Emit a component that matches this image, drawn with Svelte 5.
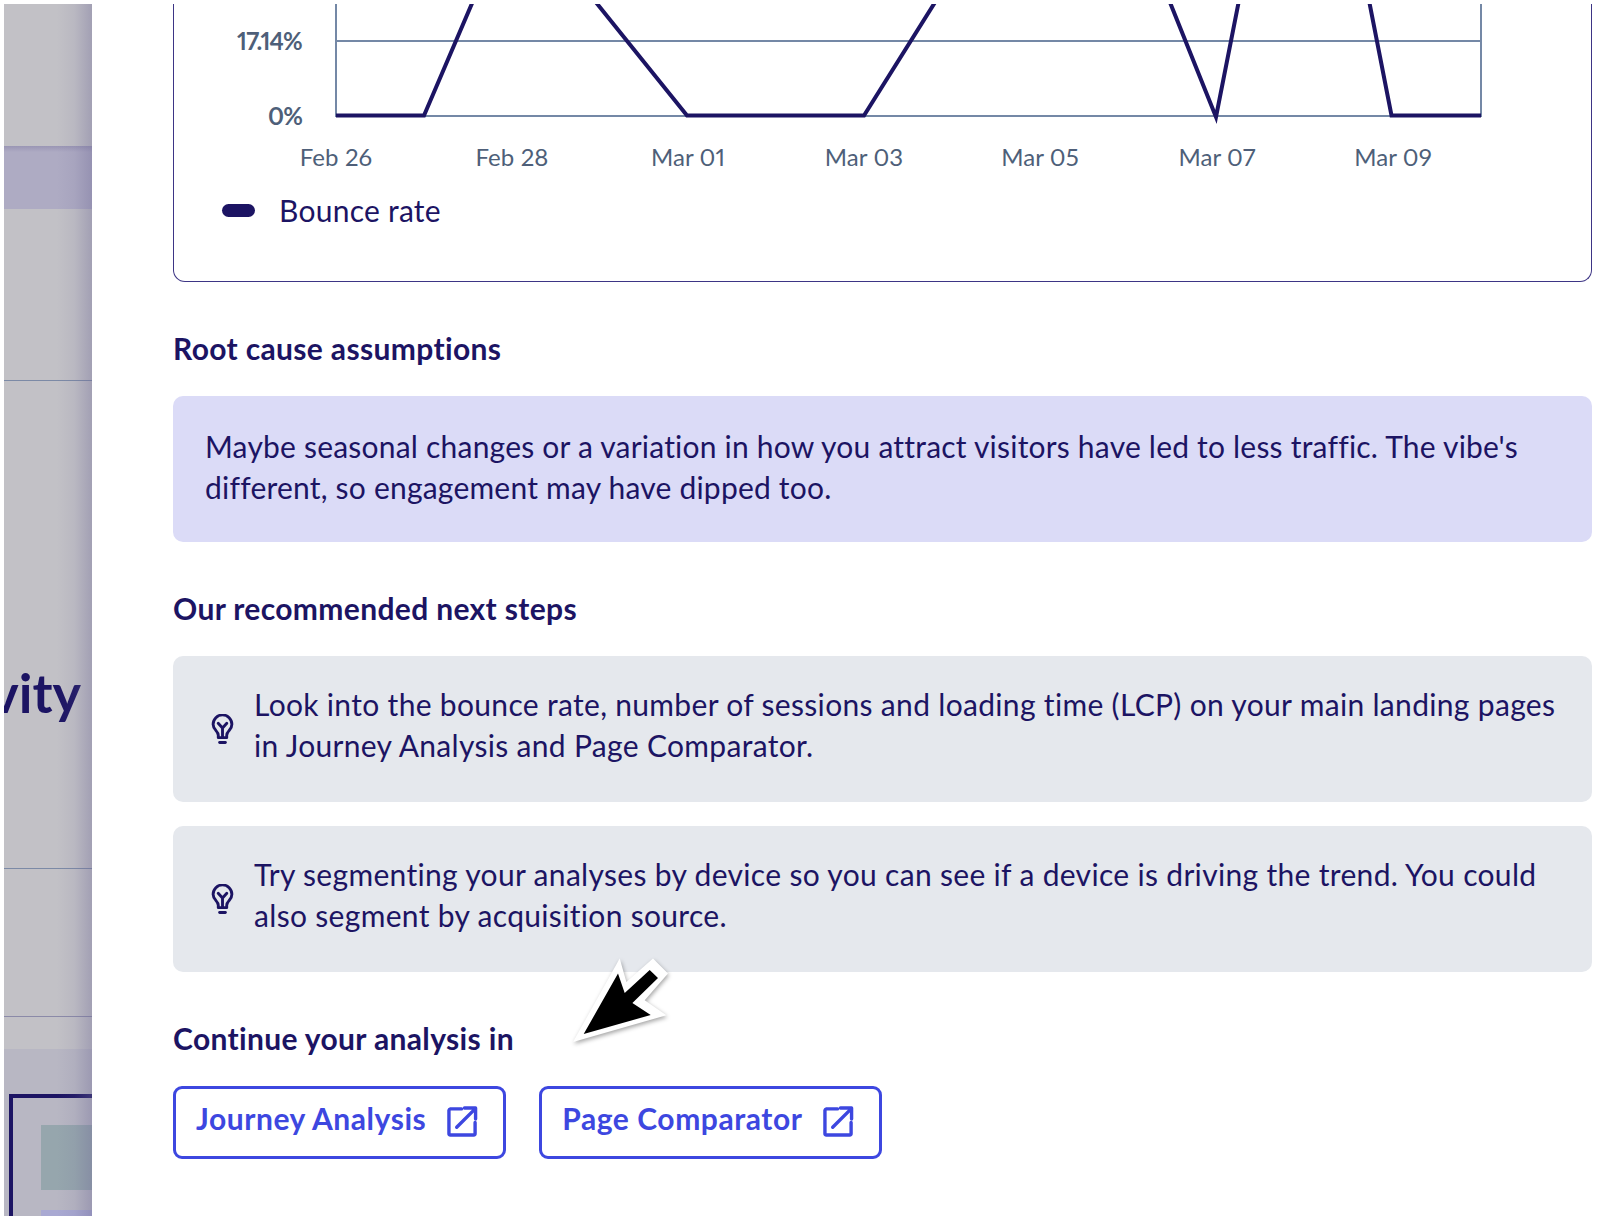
<script lang="ts">
  const ticks = [
    { label: 'Feb 26', x: 336 },
    { label: 'Feb 28', x: 512 },
    { label: 'Mar 01', x: 688 },
    { label: 'Mar 03', x: 864 },
    { label: 'Mar 05', x: 1040 },
    { label: 'Mar 07', x: 1217 },
    { label: 'Mar 09', x: 1393 }
  ];

  const bounce = '336,115.5 424,115.5 482,-20 578,-20 687,115.5 864,115.5 949,-20 1161,-20 1216,117 1243,-20 1365,-20 1391.5,115.5 1481,115.5';

  const steps = [
    'Look into the bounce rate, number of sessions and loading time (LCP) on your main landing pages in Journey Analysis and Page Comparator.',
    'Try segmenting your analyses by device so you can see if a device is driving the trend. You could also segment by acquisition source.'
  ];

  const links = ['Journey Analysis', 'Page Comparator'];
</script>

<div class="page">
  <aside class="behind">
    <div class="bg h142"></div>
    <div class="band"></div>
    <div class="bg h172 line"></div>
    <div class="bg title-row line">
      <span class="title">Activity</span>
    </div>
    <div class="bg h148 line2"></div>
    <div class="bg h33"></div>
    <div class="preview">
      <div class="frame">
        <div class="teal"></div>
        <div class="lilac"></div>
      </div>
    </div>
  </aside>

  <main class="panel">
    <section class="card">
      <svg class="chart" viewBox="174.500 4 1416 170" role="img" aria-label="Bounce rate chart">
        <line x1="336" y1="41" x2="1481" y2="41" class="grid" />
        <line x1="336" y1="116" x2="1481" y2="116" class="grid" />
        <line x1="336" y1="0" x2="336" y2="117" class="grid" />
        <line x1="1481" y1="0" x2="1481" y2="117" class="grid" />
        <polyline points={bounce} class="series" />
        <text x="302" y="50" text-anchor="end" class="ylabel">17.14%</text>
        <text x="302" y="125" text-anchor="end" class="ylabel">0%</text>
        {#each ticks as t}
          <text x={t.x} y="166" text-anchor="middle" class="xlabel">{t.label}</text>
        {/each}
      </svg>
      <div class="legend">
        <span class="pill"></span>
        <span>Bounce rate</span>
      </div>
    </section>

    <h3>Root cause assumptions</h3>
    <p class="assumption">Maybe seasonal changes or a variation in how you attract visitors have led to less traffic. The vibe's different, so engagement may have dipped too.</p>

    <h3>Our recommended next steps</h3>
    <div class="steps">
      {#each steps as step}
        <div class="step">
          <svg class="bulb" viewBox="0 0 24 32" fill="none" stroke="currentColor" stroke-width="3" stroke-linecap="round" stroke-linejoin="round">
            <path d="M7.600 24.500v-2.600c0-2-1-3.200-2.600-5A9.800 9.800 0 0 1 2.200 10.600a9.800 9.800 0 0 1 19.600 0c0 2.500-1 4.500-2.800 6.300-1.600 1.800-2.600 3-2.600 5v2.600z" />
            <path d="M12 24v-9.500M7.500 9.500 12 14.500l4.500-5" />
            <path d="M9 29.500h6" stroke-width="3" />
          </svg>
          <p>{step}</p>
        </div>
      {/each}
    </div>

    <h3>Continue your analysis in</h3>
    <div class="links">
      {#each links as link}
        <button type="button">
          {link}
          <svg viewBox="0 0 32 32" fill="none" stroke="currentColor" stroke-width="3.500" stroke-linejoin="round" stroke-linecap="round">
            <path d="M15 3H3.500a2 2 0 0 0-1.500 1.500v24a1.500 1.500 0 0 0 1.500 1.500h24a1.500 1.500 0 0 0 1.500-1.500V17" />
            <path d="M10 22 29 3M18 2h11.500v11.500" />
          </svg>
        </button>
      {/each}
    </div>

    <svg class="pointer" viewBox="0 0 110 100">
      <polygon points="5,98 51.700,14.600 58.400,38 85,14.600 100,29.600 76.700,56.300 98.400,71.300" fill="#fff" />
      <polygon points="15.700,90 50,29.600 56.700,49 81.700,26 90,34 64.400,59 82.700,71" fill="#000" />
    </svg>
  </main>
</div>

<style>
  :global(body) {
    margin: 0;
    background: #fff;
  }

  .page {
    display: flex;
    height: 1212px;
    padding: 4px 0 0 4px;
    overflow: hidden;
    font-family: "Lato", "Noto Sans", sans-serif;
    color: #1c1463;
  }

  .behind {
    position: relative;
    flex: 0 0 88px;
    overflow: hidden;
    display: flex;
    flex-direction: column;
  }

  .behind > div {
    flex-shrink: 0;
  }

  /* the modal's shadow falling on the dimmed page */
  .behind::after {
    content: '';
    position: absolute;
    inset: 0;
    background: linear-gradient(to right, rgba(110, 105, 150, 0) 60%, rgba(110, 105, 150, 0.1) 80%, rgba(110, 105, 150, 0.38) 100%);
  }

  .bg {
    background: #c2c1c6;
  }

  .h142 { height: 142px; }
  .h172 { height: 171px; }
  .h148 { height: 147px; }
  .h33 { height: 32px; }

  .line { border-bottom: 1px solid #7c8aa6; }
  .line2 { border-bottom: 1px solid #8b8aa8; }

  .band {
    height: 63px;
    background: linear-gradient(to bottom, #9a96b4 0, #aeabc3 6px);
  }

  .title-row {
    height: 488px;
    display: flex;
    justify-content: flex-end;
    box-sizing: border-box;
    padding: 282px 11px 0 0;
  }

  .title {
    font-size: 54px;
    line-height: 60px;
    font-weight: 700;
    white-space: nowrap;
    color: #1c1463;
  }

  .preview {
    flex: 1 0 auto;
    background: #b8b7c3;
    padding: 45px 0 0 5px;
  }

  .frame {
    height: 200px;
    border: solid #1c1463;
    border-width: 4px 0 0 4px;
    padding: 27px 0 0 28px;
  }

  .teal {
    height: 65px;
    background: #96a6ad;
  }

  .lilac {
    height: 20px;
    margin-top: 20px;
    background: #a9a9d2;
  }

  .panel {
    position: relative;
    flex: 1;
    padding: 0 30px 0 81px;
    min-width: 0;
  }

  .card {
    box-sizing: border-box;
    height: 278px;
    border: 1.5px solid #3d3585;
    border-top: none;
    border-radius: 0 0 12px 12px;
  }

  .chart {
    display: block;
    width: 100%;
    height: 170px;
  }

  .grid {
    stroke: #7488a6;
    stroke-width: 2;
  }

  .series {
    fill: none;
    stroke: #1c1463;
    stroke-width: 4;
    stroke-linejoin: miter;
    stroke-miterlimit: 20;
  }

  .ylabel {
    font-size: 24px;
    font-weight: 700;
    font-variant-numeric: proportional-nums;
    letter-spacing: -0.8px;
    fill: #4e5f79;
  }

  .xlabel {
    font-size: 24px;
    letter-spacing: 0.1px;
    font-variant-numeric: proportional-nums;
    fill: #4e5f79;
  }

  .legend {
    display: flex;
    align-items: center;
    gap: 24px;
    margin: 19px 0 0 48px;
    font-size: 30px;
    letter-spacing: 0.25px;
    line-height: 34px;
  }

  .pill {
    width: 33px;
    height: 13px;
    border-radius: 7px;
    background: #1c1463;
  }

  h3 {
    margin: 49px 0 31px;
    font-size: 30px;
    letter-spacing: 0.35px;
    line-height: 34px;
    font-weight: 700;
  }

  p {
    margin: 0;
    font-size: 30px;
    letter-spacing: 0.21px;
    line-height: 41px;
  }

  .assumption {
    padding: 30px 32px 34px;
    border-radius: 10px;
    background: #dbdbf7;
  }

  .steps {
    display: flex;
    flex-direction: column;
    gap: 24px;
  }

  .step {
    display: flex;
    align-items: center;
    gap: 20px;
    padding: 28px 30px 28px 38px;
    border-radius: 10px;
    background: #e5e8ed;
  }

  .step p {
    padding-bottom: 8px;
    letter-spacing: 0.32px;
  }

  .bulb {
    flex: 0 0 23px;
    width: 23px;
    height: 31px;
  }

  .links {
    display: flex;
    gap: 33px;
  }

  button {
    display: flex;
    align-items: center;
    gap: 21px;
    height: 73px;
    padding: 0 25px 10px 20px;
    border: 3px solid #3d47e0;
    border-radius: 9px;
    background: #fff;
    color: #3d47e0;
    font: 700 30px "Lato", "Noto Sans", sans-serif;
    letter-spacing: 0.55px;
  }

  button svg {
    width: 31px;
    height: 31px;
    margin-top: 8px;
  }

  .pointer {
    position: absolute;
    left: 476px;
    top: 940px;
    width: 110px;
    height: 100px;
    filter: drop-shadow(1px 2px 2px rgba(0, 0, 0, 0.35));
  }
</style>
